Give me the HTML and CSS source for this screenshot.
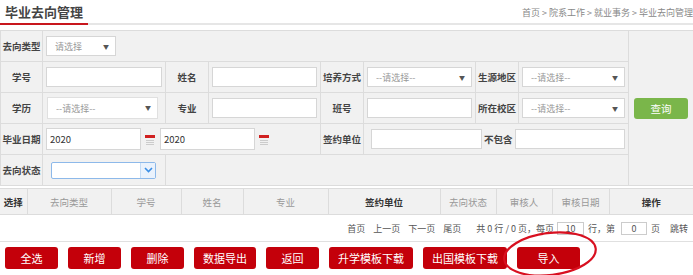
FILE: index.html
```html
<!DOCTYPE html>
<html lang="zh">
<head>
    <meta charset="UTF-8">
    <title>毕业去向管理</title>
    <link rel="stylesheet" href="styles.css">
</head>
<body>
<div class="page">
    <div class="title-bar">
        <h2 class="title">毕业去向管理</h2>
        <div class="crumb">首页 &gt; 院系工作 &gt; 就业事务 &gt; 毕业去向管理</div>
    </div>

    <table class="search">
        <colgroup>
            <col style="width:42px"><col style="width:123px"><col style="width:43px"><col style="width:112px">
            <col style="width:43px"><col style="width:112px"><col style="width:43px"><col style="width:110px"><col style="width:65px">
        </colgroup>
        <tr>
            <td class="lbl">去向类型</td>
            <td colspan="7">
                <div class="sel sel-short"><select><option>请选择</option></select></div>
            </td>
            <td rowspan="5" class="btn-cell"><button class="btn-query">查询</button></td>
        </tr>
        <tr>
            <td class="lbl">学号</td>
            <td><input type="text" class="txt"></td>
            <td class="lbl">姓名</td>
            <td><input type="text" class="txt"></td>
            <td class="lbl">培养方式</td>
            <td><div class="sel"><select><option>--请选择--</option></select></div></td>
            <td class="lbl">生源地区</td>
            <td><div class="sel"><select><option>--请选择--</option></select></div></td>
        </tr>
        <tr>
            <td class="lbl">学历</td>
            <td><div class="sel sel-edu"><select><option>--请选择--</option></select></div></td>
            <td class="lbl">专业</td>
            <td><input type="text" class="txt"></td>
            <td class="lbl">班号</td>
            <td><input type="text" class="txt"></td>
            <td class="lbl">所在校区</td>
            <td><div class="sel"><select><option>--请选择--</option></select></div></td>
        </tr>
        <tr>
            <td class="lbl">毕业日期</td>
            <td colspan="3">
                <div class="date-row">
                    <input type="text" class="txt date" value="2020">
                    <svg class="cal" width="10" height="11" viewBox="0 0 10 11">
                        <rect x="0" y="0" width="10" height="3" fill="#d02020"/>
                        <rect x="1" y="5" width="8" height="1" fill="#ccc"/>
                        <rect x="1" y="7" width="8" height="1" fill="#ccc"/>
                        <rect x="1" y="9" width="8" height="1" fill="#ccc"/>
                    </svg>
                    <input type="text" class="txt date" value="2020">
                    <svg class="cal" width="10" height="11" viewBox="0 0 10 11">
                        <rect x="0" y="0" width="10" height="3" fill="#d02020"/>
                        <rect x="1" y="5" width="8" height="1" fill="#ccc"/>
                        <rect x="1" y="7" width="8" height="1" fill="#ccc"/>
                        <rect x="1" y="9" width="8" height="1" fill="#ccc"/>
                    </svg>
                </div>
            </td>
            <td class="lbl">签约单位</td>
            <td colspan="3">
                <div class="unit-row">
                    <input type="text" class="txt unit">
                    <span class="unit-lbl">不包含</span>
                    <input type="text" class="txt unit-ex">
                </div>
            </td>
        </tr>
        <tr>
            <td class="lbl">去向状态</td>
            <td>
                <div class="combo">
                    <span class="combo-text"></span>
                    <span class="combo-arrow">
                        <svg width="9" height="6" viewBox="0 0 9 6"><polyline points="1,1 4.5,4.5 8,1" fill="none" stroke="#3a8ee6" stroke-width="1.6"/></svg>
                    </span>
                </div>
            </td>
            <td colspan="6"></td>
        </tr>
    </table>

    <table class="list">
        <colgroup>
            <col style="width:27px"><col style="width:84px"><col style="width:70px"><col style="width:62px"><col style="width:85px">
            <col style="width:112px"><col style="width:56px"><col style="width:56px"><col style="width:57px"><col style="width:84px">
        </colgroup>
        <tr>
            <th class="strong">选择</th>
            <th>去向类型</th>
            <th>学号</th>
            <th>姓名</th>
            <th>专业</th>
            <th class="strong">签约单位</th>
            <th>去向状态</th>
            <th>审核人</th>
            <th>审核日期</th>
            <th class="strong">操作</th>
        </tr>
    </table>

    <div class="pager">
        <span>首页</span>
        <span class="pg-link">上一页</span>
        <span class="pg-link">下一页</span>
        <span class="pg-link">尾页</span>
        <span class="pg-total">共 0 行 / 0 页，每页</span>
        <input type="text" class="pg-input" value="10">
        <span class="pg-unit">行，第</span>
        <input type="text" class="pg-input pg-no" value="0">
        <span class="pg-unit">页</span>
        <span class="pg-jump">跳转</span>
    </div>

    <div class="actions">
        <button class="btn-red">全选</button>
        <button class="btn-red">新增</button>
        <button class="btn-red">删除</button>
        <button class="btn-red">数据导出</button>
        <button class="btn-red">返回</button>
        <button class="btn-red">升学模板下载</button>
        <button class="btn-red">出国模板下载</button>
        <button class="btn-red btn-import">导入</button>
    </div>

    <!-- 标注圈 -->
    <svg class="mark" width="112" height="62" viewBox="0 0 112 62">
        <ellipse cx="56" cy="28" rx="46" ry="21" fill="none" stroke="#d81020" stroke-width="2.2" transform="rotate(-7 56 28)"/>
    </svg>
</div>
</body>
</html>
```

FILE: styles.css
```css
* {
    box-sizing: border-box;
    font-family: "Noto Sans CJK SC", "Noto Sans", sans-serif;
}

body {
    margin: 0;
    background: #fff;
    color: #333;
}

.page {
    position: relative;
    width: 693px;
    height: 275px;
    overflow: hidden;
}

/* 标题栏 */
.title-bar {
    display: flex;
    justify-content: space-between;
    align-items: center;
    height: 25px;
    border-bottom: 2px solid #e6e6e6;
}

.title {
    margin: 0 0 -2px 0;
    width: 88px;
    height: 25px;
    padding-left: 5px;
    font-size: 13px;
    line-height: 24px;
    font-weight: bold;
    color: #444;
    border-bottom: 2px solid #c8161d;
}

.crumb {
    font-size: 9px;
    color: #888;
    white-space: nowrap;
    padding-top: 2px;
}

/* 查询区 */
.search {
    margin-top: 5px;
    width: 693px;
    table-layout: fixed;
    border-collapse: collapse;
    background: #f1f1f1;
}

.search td {
    height: 31px;
    padding: 0 3px;
    border: 1px solid #dcdcdc;
    font-size: 9.5px;
    vertical-align: middle;
}

.search td.lbl {
    padding: 0;
    text-align: center;
    font-weight: bold;
    color: #444;
    white-space: nowrap;
}

.txt {
    display: block;
    width: 100%;
    height: 20px;
    border: 1px solid #d6d6d6;
    background: #fff;
    padding: 0 4px;
    font-size: 9.5px;
    color: #333;
    outline: none;
}

.sel {
    position: relative;
    width: 100%;
}

.sel select {
    width: 100%;
    height: 20px;
    appearance: none;
    -webkit-appearance: none;
    border: 1px solid #d6d6d6;
    background: #fff;
    padding: 0 8px;
    font-size: 9px;
    color: #999;
    outline: none;
}

.sel::after {
    content: "▼";
    position: absolute;
    right: 7px;
    top: 6px;
    font-size: 6px;
    color: #555;
    pointer-events: none;
}

.sel-short {
    width: 70px;
}

.sel-edu {
    width: 111px;
    margin-left: 1px;
}

.sel-edu select {
    height: 22px;
    border-color: #e0e0e0;
}

.date-row {
    display: flex;
    align-items: center;
}

.txt.date {
    width: 95px;
    height: 22px;
    font-size: 9.5px;
    padding-left: 3px;
}

.cal {
    margin: 2px 5px 0 4px;
}

.unit-row {
    display: flex;
    align-items: center;
}

.txt.unit {
    width: 111px;
    margin-left: 4px;
}

.unit-lbl {
    font-size: 9.5px;
    font-weight: bold;
    color: #444;
    margin: 0 2px;
}

.txt.unit-ex {
    width: 110px;
}

.combo {
    display: flex;
    width: 105px;
    height: 17px;
    margin-left: 5px;
    border: 1px solid #8db9ea;
    border-radius: 2px;
    background: #fff;
}

.combo-text {
    flex: 1;
}

.combo-arrow {
    display: flex;
    align-items: center;
    justify-content: center;
    width: 15px;
    background: #eaf2fc;
    border-left: 1px solid #c5dcf5;
}

.btn-cell {
    text-align: center;
}

.btn-query {
    width: 54px;
    height: 21px;
    border: none;
    border-radius: 3px;
    background: #7ab64a;
    color: #fff;
    font-size: 10.5px;
    cursor: pointer;
}

/* 列表表头 */
.list {
    margin-top: 2px;
    width: 693px;
    table-layout: fixed;
    border-collapse: collapse;
    background: #f1f1f1;
}

.list th {
    height: 26px;
    border: 1px solid #dcdcdc;
    font-size: 9.5px;
    font-weight: normal;
    color: #999;
}

.list th:first-child {
    border-left: none;
}

.list th:last-child {
    border-right: none;
}

.list th.strong {
    font-weight: bold;
    color: #333;
}

/* 分页 */
.pager {
    display: flex;
    justify-content: flex-end;
    align-items: center;
    height: 27px;
    padding-right: 5px;
    border-bottom: 1px solid #e0e0e0;
    font-size: 9px;
    color: #555;
    white-space: nowrap;
}

.pg-link {
    margin-left: 8px;
}

.pg-total {
    margin-left: 15px;
}

.pg-input {
    width: 27px;
    height: 13px;
    margin-left: 3px;
    border: 1px solid #ccc;
    padding: 0 3px;
    font-size: 9px;
    text-align: center;
    color: #555;
}

.pg-no {
    width: 26px;
    margin-left: 6px;
}

.pg-unit {
    margin-left: 4px;
}

.pg-jump {
    margin-left: 10px;
}

/* 底部按钮 */
.actions {
    display: flex;
    gap: 10px;
    padding: 5px 0 0 5px;
}

.btn-red {
    min-width: 53px;
    height: 22px;
    padding: 0 9px;
    border: none;
    border-radius: 3px;
    background: #c4000a;
    color: #fff;
    font-size: 11px;
    cursor: pointer;
}

.btn-import {
    width: 63px;
}

.mark {
    position: absolute;
    left: 494px;
    top: 226px;
}
```
